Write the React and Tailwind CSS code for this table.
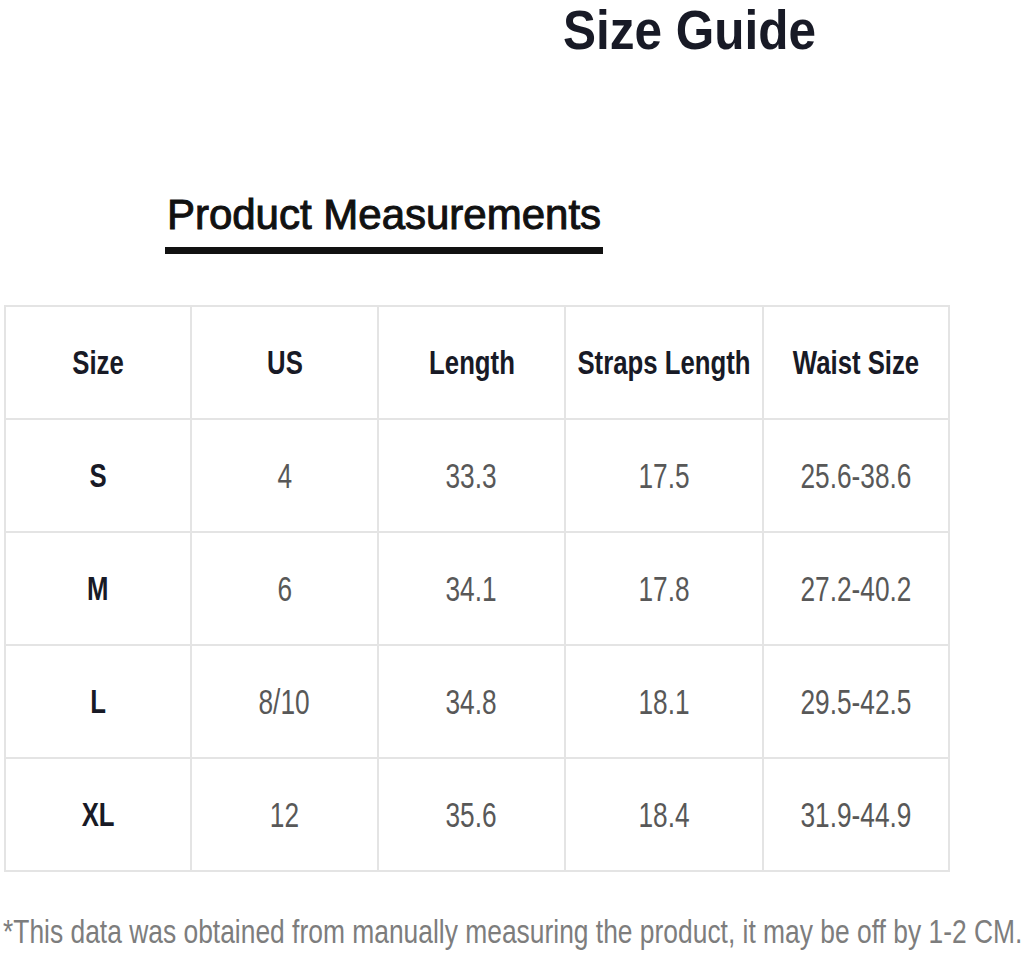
import React from 'react';

const headers = ['Size', 'US', 'Length', 'Straps Length', 'Waist Size'];

const rows = [
  ['S', '4', '33.3', '17.5', '25.6-38.6'],
  ['M', '6', '34.1', '17.8', '27.2-40.2'],
  ['L', '8/10', '34.8', '18.1', '29.5-42.5'],
  ['XL', '12', '35.6', '18.4', '31.9-44.9'],
];

const font = { fontFamily: '"Liberation Sans", Arial, sans-serif' };

const Cell = ({ children, bold }) => (
  <div className="bg-white h-[111px] flex items-center justify-center">
    {bold ? (
      <span className="inline-block whitespace-nowrap text-[33px] font-bold leading-none text-[#181a26] scale-x-[0.78]">
        {children}
      </span>
    ) : (
      <span className="inline-block whitespace-nowrap text-[35px] leading-none text-[#585858] scale-x-[0.75]">
        {children}
      </span>
    )}
  </div>
);

const App = () => {
  return (
    <div className="w-[1022px] h-[955px] bg-white overflow-hidden" style={font}>
      <div className="pl-[563px] h-[62px]">
        <span className="inline-block origin-left whitespace-nowrap text-[55px] font-bold leading-[1.12] text-[#181a26] scale-x-[0.9]">
          Size Guide
        </span>
      </div>

      <div className="mt-[132px] pl-[165px]">
        <div className="w-[438px]">
          <div className="text-center whitespace-nowrap text-[42px] leading-none text-[#111111] [-webkit-text-stroke:1px_#111111]">
            Product Measurements
          </div>
          <div className="mt-[11px] h-[7px] bg-[#111111]" />
        </div>
      </div>

      <div className="mt-[51px] ml-[4px] w-[946px] grid grid-cols-[184px_185px_185px_196px_184px] gap-[2px] p-[2px] bg-[#e4e4e4]">
        {headers.map((h) => (
          <Cell key={h} bold>{h}</Cell>
        ))}
        {rows.map((r) =>
          r.map((v, i) => (
            <Cell key={r[0] + i} bold={i === 0}>{v}</Cell>
          ))
        )}
      </div>

      <div className="mt-[43px] pl-[3px] whitespace-nowrap">
        <span className="inline-block origin-left text-[33px] leading-none text-[#7d7d7d] scale-x-[0.8]">
          *This data was obtained from manually measuring the product, it may be off by 1-2 CM.
        </span>
      </div>
    </div>
  );
};

export default App;
